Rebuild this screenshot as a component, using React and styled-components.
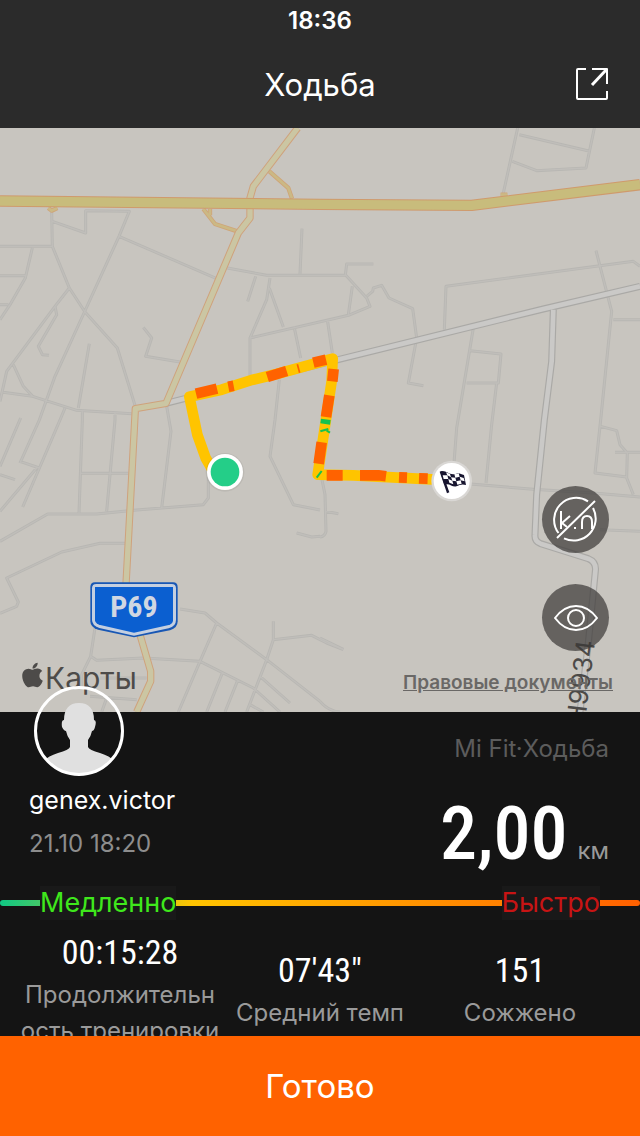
import React from 'react';
import styled, { createGlobalStyle } from 'styled-components';
import { FaApple } from 'react-icons/fa';

const GlobalStyle = createGlobalStyle`
  * { box-sizing: border-box; }
  body { margin: 0; background: #141414; }
`;

const sans = `Inter, "Noto Sans", sans-serif`;
const narrow = `"Roboto Condensed", Roboto, sans-serif`;

const Page = styled.div`
  min-height: 100vh;
  display: flex;
  flex-direction: column;
  background: #141414;
  color: #fff;
  font-family: ${sans};
`;

const Header = styled.header`
  background: #2b2b2b;
`;

const StatusBar = styled.div`
  height: 40px;
  line-height: 42px;
  text-align: center;
  font-size: 24px;
  font-weight: 600;
`;

const TitleBar = styled.div`
  height: 88px;
  padding: 0 31px;
  display: grid;
  grid-template-columns: 1fr auto 1fr;
  align-items: center;
`;

const Title = styled.h1`
  grid-column: 2;
  margin: 0;
  font-size: 31px;
  font-weight: 400;
`;

const IconButton = styled.button`
  justify-self: end;
  display: flex;
  padding: 0;
  border: 0;
  background: none;
  color: #fff;
`;

const MapArea = styled.section`
  position: relative;
  flex: 1;
  min-height: 400px;
  overflow: hidden;
  background: #c8c5bf;
`;

const MapDrawing = styled.svg`
  position: absolute;
  inset: 0;
  width: 100%;
  height: 100%;
`;

const MapControls = styled.div`
  position: absolute;
  right: 31px;
  bottom: 61px;
  display: flex;
  flex-direction: column;
  gap: 31px;
`;

const RoundButton = styled.button`
  width: 67px;
  height: 67px;
  padding: 0;
  border: 0;
  border-radius: 50%;
  display: flex;
  align-items: center;
  justify-content: center;
  color: #fff;
  background: rgba(58, 56, 54, 0.7);
`;

const MapFooter = styled.div`
  position: absolute;
  left: 22px;
  right: 27px;
  bottom: 14px;
  display: flex;
  justify-content: space-between;
  align-items: baseline;
`;

const MapBrand = styled.div`
  display: flex;
  align-items: baseline;
  gap: 2px;
  color: #4d4b49;
  font-size: 30px;
  line-height: 40px;
`;

const AppleMark = styled(FaApple)`
  width: 21px;
  height: 28px;
`;

const LegalLink = styled.a`
  color: #6a6866;
  font-size: 19px;
  font-weight: 600;
  text-decoration: underline;
`;

const Panel = styled.section`
  position: relative;
  max-height: 324px;
`;

const Summary = styled.div`
  height: 174px;
  padding: 0 31px 0 29px;
  display: flex;
  justify-content: space-between;
`;

const Column = styled.div`
  display: flex;
  flex-direction: column;
  align-items: ${(p) => (p.$end ? 'flex-end' : 'flex-start')};
`;

const Avatar = styled.svg`
  width: 90px;
  height: 90px;
  margin: -26px 0 0 5px;
`;

const UserName = styled.div`
  margin-top: 6px;
  font-size: 25px;
  line-height: 36px;
`;

const Muted = styled.div`
  margin-top: ${(p) => p.$top}px;
  font-size: 24px;
  line-height: 32px;
  color: ${(p) => p.$color};
`;

const Distance = styled.div`
  display: flex;
  align-items: baseline;
  gap: 10px;
  margin-top: 23px;
`;

const DistanceValue = styled.span`
  font-family: ${narrow};
  font-size: 74px;
  line-height: 92px;
  font-weight: 500;
`;

const Unit = styled.span`
  font-size: 24px;
  color: #9a9a9a;
`;

const PaceScale = styled.div`
  position: relative;
  display: flex;
  justify-content: space-between;
  align-items: center;
  height: 34px;
  padding: 0 40px;

  &::before {
    content: '';
    position: absolute;
    left: 0;
    right: 0;
    height: 6px;
    border-radius: 3px;
    background: linear-gradient(90deg, #10c884 0%, #ffc400 30%, #ffa800 50%, #ff7e00 80%, #ff6000 100%);
  }
`;

const PaceLabel = styled.span`
  position: relative;
  background: #191919;
  color: ${(p) => p.$color};
  font-size: 27px;
  line-height: 34px;
`;

const Stats = styled.dl`
  margin: 0;
  padding: 0 20px;
  height: 140px;
  display: grid;
  grid-template-columns: repeat(3, 1fr);
  align-items: center;
`;

const Stat = styled.div`
  display: flex;
  flex-direction: column-reverse;
  text-align: center;
`;

const StatValue = styled.dd`
  margin: 0 0 4px;
  font-family: ${narrow};
  font-size: 34px;
  line-height: 42px;
`;

const StatLabel = styled.dt`
  font-size: 24px;
  line-height: 36px;
  color: #9a9a9a;
  word-break: break-all;
`;

const DoneButton = styled.button`
  position: relative;
  width: 100%;
  height: 100px;
  padding: 0;
  border: 0;
  background: #ff6200;
  color: #fff;
  font-family: ${sans};
  font-size: 33px;
`;

/* Map geometry is in thirds of a pixel: 1920 x 1752 units. */
const streets = [
  'M155 250L157 355L208 480L255 552L352 660L405 832',
  'M0 355H157M157 280L257 315V248L388 250L357 325L252 555L165 745L118 876L60 1005',
  'M97 360L76 450L30 530L0 575M0 443H80M0 530H25',
  'M357 325L650 452M208 480L165 535L20 730L0 820M165 535L170 560L115 655L127 680L147 682',
  'M40 710L70 775L98 805M10 793L98 805L230 847L395 857M268 647L235 840M430 598L455 630L437 685L540 702',
  'M195 840L180 876L68 1137M247 850V876L237 1155M345 855V876L320 1150M243 1036H385',
  'M500 835L513 910L485 1140M60 1000L118 1020M62 870L0 1015M110 1020L0 1150M0 1040L45 1055',
  'M0 1240L143 1158L290 1158L400 1147L610 1130L625 1110V1020',
  'M375 1246H300L185 1272L20 1350L55 1422L50 1435L0 1456',
  'M285 1500L272 1585L290 1597L430 1590L600 1600L760 1680L840 1752M272 1585L245 1640V1680',
  'M540 1443L615 1455L650 1485L800 1595L960 1720M650 1485L600 1600L535 1752M667 1635L620 1752M713 1657L675 1752',
  'M820 1480V1535L800 1595L740 1752M820 1535L935 1522L980 1545L1030 1565M780 1645L870 1725M750 1730L790 1752',
  'M300 1650H440M270 1705L410 1715M320 1710L305 1752',
  'M906 302L900 438M682 420L800 442H1036L1040 408H1120M767 445L743 520M810 450L800 515L750 630V745M808 480L850 597',
  'M1036 440L1100 510L1110 535L1045 562L750 630M1057 475L1045 560M882 595L902 690M982 575L997 675',
  'M1100 505L1118 490L1120 480L1145 472L1167 510L1238 542L1250 630L1225 765L1270 773',
  'M1333 605L1338 475L1900 400L1920 415M1420 600L1370 900L1362 1005M1410 668L1503 678L1495 765H1400M1490 765L1475 890L1458 1065',
  'M1553 0L1510 195M1558 20L1770 70M1537 100L1610 128L1758 120L1783 0',
  'M1788 368L1835 550L1802 876L1785 1035L1880 1047M1840 575H1920M1802 895L1850 908L1860 950L1880 973M1845 973H1920M1882 973L1880 1050L1900 1100',
  'M838 755L825 876L810 985L880 1130L960 1146M965 1050L975 1100L978 1210Q975 1225 960 1227M890 1215L935 1227L960 1225M975 1150L1015 1157M960 1530L1030 1564',
  'M1375 1065L1600 1084L1780 1095L1920 1107M1800 1205L1920 1210M960 1720C980 1745 1000 1750 1020 1752',
];

const whiteRoads = 'M498 826L1018 694L1630 543L1920 475M1660 545L1655 700L1633 876L1610 1100L1605 1220Q1603 1240 1622 1247L1765 1292Q1790 1302 1786 1330L1765 1545L1740 1752';
const yellowRoad = 'M893 0L760 175L750 210V270L715 315L498 826L406 842L403 900L378 1370L420 1520L452 1630V1660L410 1752';
const links = 'M808 130L865 180L876 212M610 243L645 288L712 310M630 243V262M145 240L155 248L172 240M1502 200H1522';

function Route() {
  return (
    <g fill="none" strokeWidth="32" strokeLinejoin="round">
      <path
        stroke="#ffc400"
        strokeLinecap="round"
        d="M640 1030L617 990L592 920L568 806L665 785L755 756L830 738L998 692L995 760L953 1040L1060 1042L1310 1055"
      />
      <g stroke="#ff6200">
        <path d="M588 797L651 782M685 776L701 773M802 747L860 729M940 704L978 695" />
        <path d="M892 709L899 734" strokeWidth="5" />
        <path d="M1001 723L997 760M988 802L978 867M965 943L956 1007M980 1042H1028M1080 1042H1135L1158 1045M1197 1048L1221 1049M1257 1051L1283 1052" />
      </g>
      <g stroke="#16c24f">
        <path d="M961 910L985 903M980 908L990 914M950 1049L965 1029" strokeWidth="6" />
        <path d="M962 879L991 883" strokeWidth="14" />
      </g>
    </g>
  );
}

function CityMap() {
  return (
    <MapDrawing viewBox="0 0 1920 1752" preserveAspectRatio="xMidYMid slice" role="img" aria-label="Карта маршрута">
      <g fill="none" strokeLinejoin="round">
        <path d={streets.join('')} stroke="#b8b7b3" strokeWidth="9" />
        <path d={streets.join('')} stroke="#c0beba" strokeWidth="4" />
        <path d={whiteRoads} stroke="#aaa9a6" strokeWidth="21" />
        <path d={whiteRoads} stroke="#cac9c7" strokeWidth="14" />
        <path d={links} stroke="#cfa578" strokeWidth="13" />
        <path d={links} stroke="#cbb985" strokeWidth="8" />
        <path d={yellowRoad} stroke="#cfa27c" strokeWidth="22" />
        <path d={yellowRoad} stroke="#cbc6a3" strokeWidth="16" />
        <path d="M0 219L960 229L1415 232L1920 170" stroke="#cf9a6c" strokeWidth="34" />
        <path d="M0 219L960 229L1415 232L1920 170" stroke="#c8bc7c" strokeWidth="28" />
      </g>
      <g>
        <path d="M285 1363H519Q533 1363 533 1377V1480Q533 1500 510 1507L402 1528L294 1505Q271 1498 271 1480V1377Q271 1363 285 1363Z" fill="#1857b4" />
        <path d="M289 1368H515Q528 1368 528 1381V1476Q528 1495 506 1501L402 1523L298 1500Q276 1492 276 1476V1381Q276 1368 289 1368Z" fill="#c4cfe0" />
        <path d="M285 1377H519V1478Q518 1488 503 1492L402 1514L301 1491Q287 1486 285 1478Z" fill="#0b5fd0" />
        <text x="402" y="1467" textAnchor="middle" fill="#d0d7e2" fontSize="90" fontWeight="700" fontFamily="Roboto Condensed, Roboto, sans-serif">P69</text>
      </g>
      <text transform="translate(1754 1791) rotate(-83)" fill="#4c4a48" fontSize="78" fontFamily="Inter, sans-serif">H9934</text>
      <Route />
      <circle cx="675" cy="1033" r="58" fill="#000" opacity="0.06" />
      <circle cx="675" cy="1032" r="54" fill="#fff" />
      <circle cx="675" cy="1032" r="43" fill="#24ce88" />
      <circle cx="1355" cy="1059" r="61" fill="#d9d7d4" />
      <circle cx="1355" cy="1059" r="54" fill="#fff" />
      <g transform="translate(1355 1059)">
        <path d="M-36 -28L-30 -30L-7 34L-14 37Z" fill="#17152f" />
        <path d="M-34 -28C-18 -36 -8 -14 14 -22C22 -26 28 -21 37 -18L43 12C30 8 24 12 14 16C2 20 -8 4 -22 12Z" fill="#17152f" />
        <path d="M-17 -26L-5 -21L-2 -11L-13 -17ZM8 -20L21 -23L24 -13L11 -10ZM-27 -17L-13 -17L-10 -6L-24 -6ZM-2 -11L11 -10L14 1L2 -1ZM24 -13L36 -9L39 1L27 -2ZM-10 -6L2 -1L5 10L-7 5ZM14 1L27 -2L30 8L17 11Z" fill="#fff" />
      </g>
    </MapDrawing>
  );
}

function ShareIcon() {
  return (
    <svg width="34" height="34" viewBox="0 0 34 34" fill="none" stroke="currentColor" strokeWidth="2" strokeLinejoin="round">
      <path d="M11 2H3Q2 2 2 3V31Q2 32 3 32H31Q32 32 32 31V24M17 2H32V17" />
      <path d="M31 3L17 18" strokeWidth="3" />
    </svg>
  );
}

function KmOffIcon() {
  return (
    <svg width="47" height="47" viewBox="0 0 47 47" fill="none" stroke="currentColor" strokeWidth="2">
      <path d="M36 5.300A22 22 0 0 0 6.500 37M12 42.300A22 22 0 0 0 41 12M43 5L5 42" />
      <path d="M9 15V33M18 20L10 27L15 31M23 31V33M30 33V26Q30 20 35 20Q40 20 40 26V33" />
    </svg>
  );
}

function EyeIcon() {
  return (
    <svg width="44" height="28" viewBox="0 0 44 28" fill="none" stroke="currentColor" strokeWidth="2" strokeLinejoin="round">
      <path d="M1 14Q10 2 22 2Q34 2 43 14Q34 26 22 26Q10 26 1 14Z" />
      <circle cx="22" cy="14" r="8" />
    </svg>
  );
}

function UserAvatar() {
  return (
    <Avatar viewBox="0 0 90 90" role="img" aria-label="genex.victor">
      <clipPath id="avatar-clip"><circle cx="45" cy="45" r="44" /></clipPath>
      <path
        clipPath="url(#avatar-clip)"
        fill="#e0e0e0"
        d="M45 17C55 17 60 23 60 34Q63 34 61 41Q60 45 58 45Q57 50 54 54V61Q55 64 66 67Q76 70 80 75V90H10V75Q14 70 24 67Q35 64 36 61V54Q33 50 32 45Q30 45 28 41Q27 34 30 34C30 23 35 17 45 17Z"
      />
      <circle cx="45" cy="45" r="43.5" fill="none" stroke="#fff" strokeWidth="3" />
    </Avatar>
  );
}

const stats = [
  { label: 'Продолжительность тренировки', value: '00:15:28' },
  { label: 'Средний темп', value: '07\'43"' },
  { label: 'Сожжено', value: '151' },
];

export default function App() {
  return (
    <Page>
      <GlobalStyle />
      <Header>
        <StatusBar>18:36</StatusBar>
        <TitleBar>
          <Title>Ходьба</Title>
          <IconButton type="button" aria-label="Поделиться"><ShareIcon /></IconButton>
        </TitleBar>
      </Header>
      <MapArea>
        <CityMap />
        <MapControls>
          <RoundButton type="button" aria-label="Скрыть километры"><KmOffIcon /></RoundButton>
          <RoundButton type="button" aria-label="Показать карту"><EyeIcon /></RoundButton>
        </MapControls>
        <MapFooter>
          <MapBrand><AppleMark />Карты</MapBrand>
          <LegalLink href="#legal">Правовые документы</LegalLink>
        </MapFooter>
      </MapArea>
      <Panel>
        <Summary>
          <Column>
            <UserAvatar />
            <UserName>genex.victor</UserName>
            <Muted $top={10} $color="#8d8d8d">21.10 18:20</Muted>
          </Column>
          <Column $end>
            <Muted $top={21} $color="#5c5c5c">Mi Fit·Ходьба</Muted>
            <Distance>
              <DistanceValue>2,00</DistanceValue>
              <Unit>км</Unit>
            </Distance>
          </Column>
        </Summary>
        <PaceScale>
          <PaceLabel $color="#3fe81c">Медленно</PaceLabel>
          <PaceLabel $color="#c81414">Быстро</PaceLabel>
        </PaceScale>
        <Stats>
          {stats.map((s) => (
            <Stat key={s.label}>
              <StatLabel>{s.label}</StatLabel>
              <StatValue>{s.value}</StatValue>
            </Stat>
          ))}
        </Stats>
      </Panel>
      <DoneButton type="button">Готово</DoneButton>
    </Page>
  );
}
